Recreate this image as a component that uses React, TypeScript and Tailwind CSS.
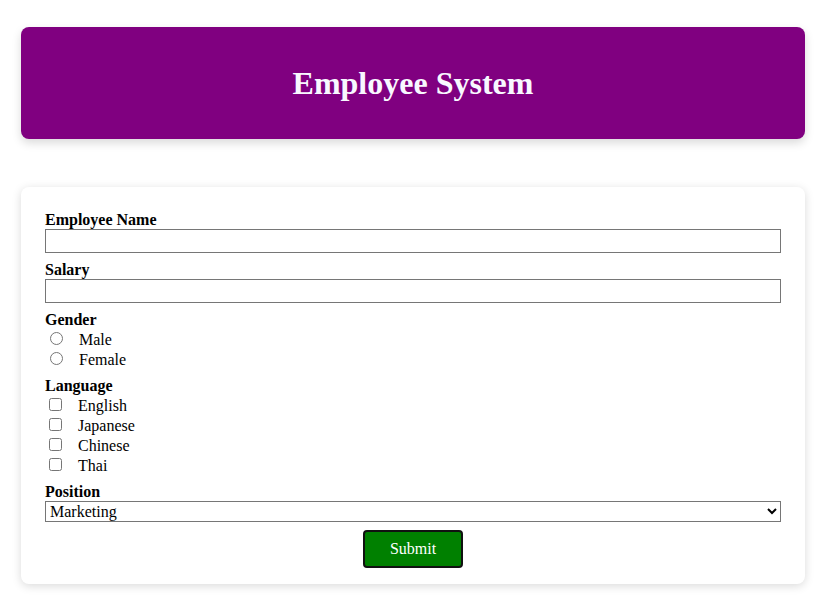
export default function App() {
  const languages = ['English', 'Japanese', 'Chinese', 'Thai']

  return (
    <div className="min-h-screen bg-white pt-[27px] pl-[21px] font-['Liberation_Serif',serif] text-base text-black">
      <header className="flex h-[112px] w-[784px] items-center justify-center rounded-lg bg-[#800080] shadow-[0_4px_10px_rgba(0,0,0,0.15)]">
        <h1 className="text-[32px] font-bold leading-none text-[#f8f8ff]">Employee System</h1>
      </header>

      <form className="mt-[48px] w-[784px] rounded-lg bg-white px-6 pt-6 pb-4 shadow-[0_2px_10px_rgba(0,0,0,0.15)]">
        <div className="mb-2">
          <label className="block h-[18px] font-bold leading-[18px]">Employee Name</label>
          <input type="text" className="block h-[24px] w-full border border-[#767676] px-[2px]" />
        </div>

        <div className="mb-2">
          <label className="block h-[18px] font-bold leading-[18px]">Salary</label>
          <input type="text" className="block h-[24px] w-full border border-[#767676] px-[2px]" />
        </div>

        <div className="mb-2">
          <label className="block h-[18px] font-bold leading-[18px]">Gender</label>
          {['Male', 'Female'].map((g) => (
            <div key={g} className="flex h-[20px] items-start">
              <input type="radio" name="gender" className="mt-[3px] ml-[5px] h-[13px] w-[13px]" />
              <span className="mt-[2px] ml-[16px] leading-[18px]">{g}</span>
            </div>
          ))}
        </div>

        <div className="mb-2">
          <label className="block h-[18px] font-bold leading-[18px]">Language</label>
          {languages.map((l) => (
            <div key={l} className="flex h-[20px] items-start">
              <input type="checkbox" className="mt-[3px] ml-[4px] h-[13px] w-[13px]" />
              <span className="mt-[2px] ml-[16px] leading-[18px]">{l}</span>
            </div>
          ))}
        </div>

        <div>
          <label className="block h-[18px] font-bold leading-[18px]">Position</label>
          <select className="block h-[21px] w-full border border-[#767676] bg-white" defaultValue="Marketing">
            <option>Marketing</option>
            <option>Sales</option>
            <option>Engineering</option>
          </select>
        </div>

        <div className="mt-2 flex justify-center">
          <button type="button" className="h-[38px] w-[100px] rounded border-2 border-[#111] bg-[#008000] text-white">
            Submit
          </button>
        </div>
      </form>
    </div>
  )
}
